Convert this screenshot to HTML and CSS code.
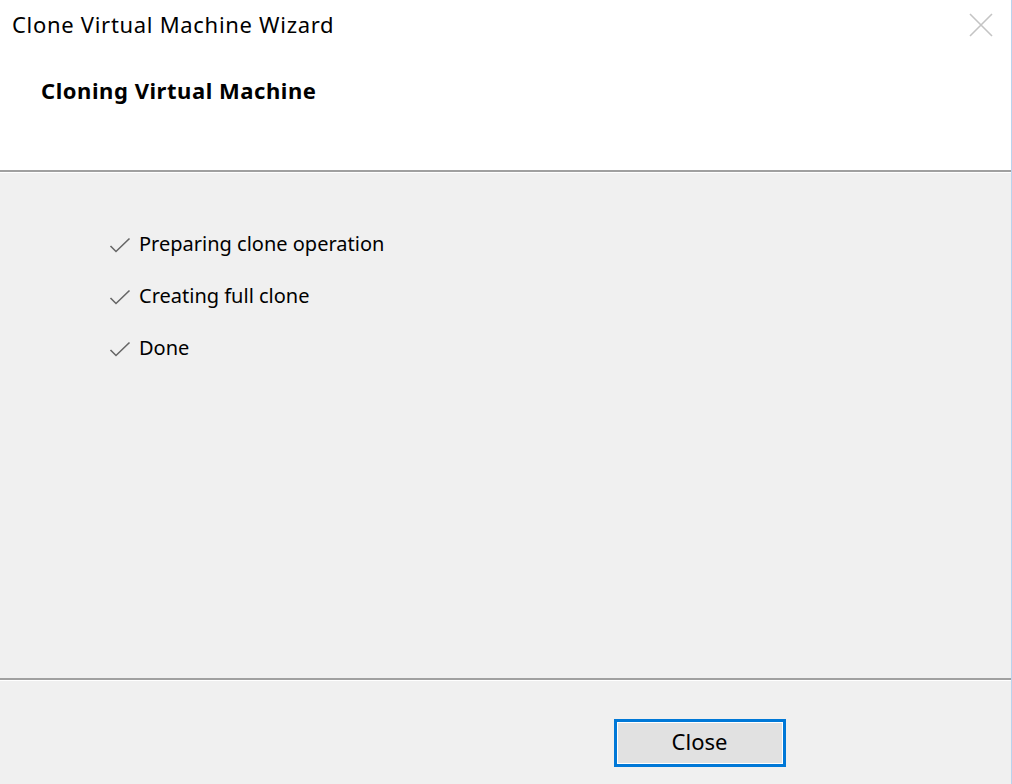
FILE: index.html
```html
<!DOCTYPE html>
<html>
<head>
<meta charset="utf-8">
<link rel="stylesheet" href="styles.css">
</head>
<body>
<div class="window">
  <div class="header">
    <div class="titlebar">
      <span class="title">Clone Virtual Machine Wizard</span>
      <svg class="close-x" width="24" height="24" viewBox="0 0 24 24"><path d="M1 1 L23 23 M23 1 L1 23" stroke="#c4c4c4" stroke-width="1.6" fill="none"/></svg>
    </div>
    <h1 class="heading">Cloning Virtual Machine</h1>
  </div>
  <div class="sep"></div>
  <div class="body">
    <ul class="steps">
      <li><svg class="check" width="22" height="16" viewBox="0 0 22 16"><path d="M1.5 9 L7 14.5 L20.5 1.5" stroke="#666" stroke-width="1.6" fill="none"/></svg>Preparing clone operation</li>
      <li><svg class="check" width="22" height="16" viewBox="0 0 22 16"><path d="M1.5 9 L7 14.5 L20.5 1.5" stroke="#666" stroke-width="1.6" fill="none"/></svg>Creating full clone</li>
      <li><svg class="check" width="22" height="16" viewBox="0 0 22 16"><path d="M1.5 9 L7 14.5 L20.5 1.5" stroke="#666" stroke-width="1.6" fill="none"/></svg>Done</li>
    </ul>
  </div>
  <div class="sep"></div>
  <div class="footer">
    <button class="btn">Close</button>
  </div>
</div>
</body>
</html>
```
FILE: styles.css
```css
html, body {
  margin: 0;
  padding: 0;
}
body {
  font-family: "Noto Sans", "Open Sans", sans-serif;
  color: #000;
}
.window {
  width: 1012px;
  height: 784px;
  display: flex;
  flex-direction: column;
  background: #f0f0f0;
  box-sizing: border-box;
  border-right: 1px solid #b9d3ee;
}
.header {
  background: #fff;
  height: 170px;
  box-sizing: border-box;
}
.titlebar {
  height: 48px;
  display: flex;
  align-items: center;
  justify-content: space-between;
  padding: 0 18px 0 12px;
}
.title {
  font-size: 22px;
  letter-spacing: 0.7px;
}
.close-x {
  display: block;
  margin-top: 2px;
}
.heading {
  margin: 27px 0 0 41px;
  font-size: 22px;
  line-height: 30px;
  font-weight: bold;
  letter-spacing: 0.55px;
}
.sep {
  height: 2px;
  background: #a0a0a0;
  border-bottom: 1px solid #fff;
}
.body {
  flex: 1;
  padding: 55px 0 0 109px;
}
.steps {
  list-style: none;
  margin: 0;
  padding: 0;
  display: flex;
  flex-direction: column;
  gap: 22px;
}
.steps li {
  display: flex;
  align-items: center;
  font-size: 20px;
  height: 30px;
  letter-spacing: 0;
}
.check {
  margin: 4px 8px 0 0;
}
.footer {
  height: 103px;
  display: flex;
  justify-content: center;
  padding-top: 38px;
  box-sizing: border-box;
  padding-left: 388px;
}
.btn {
  width: 172px;
  height: 48px;
  background: #e1e1e1;
  border: 3px solid #0078d7;
  box-shadow: inset 0 0 0 1px #fff;
  font-family: "Noto Sans", sans-serif;
  font-size: 22px;
  color: #000;
  padding: 0 0 4px 0;
}
```
